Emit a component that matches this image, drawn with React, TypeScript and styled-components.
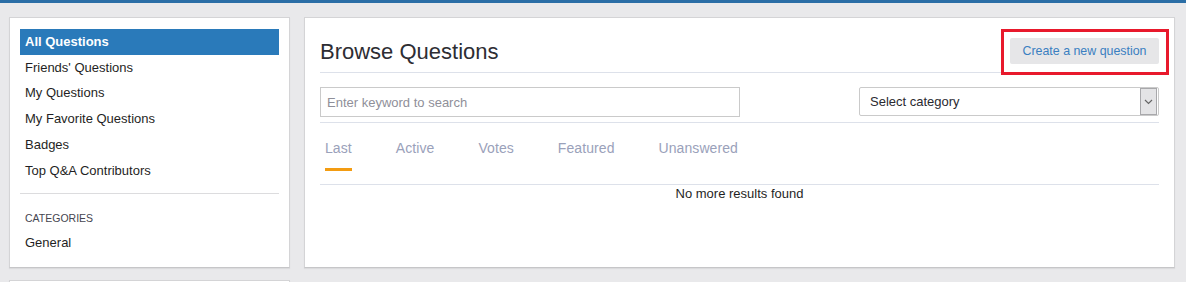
import styled, { createGlobalStyle } from "styled-components";

const GlobalStyle = createGlobalStyle`
  html, body {
    margin: 0;
    padding: 0;
    background: #e9e9eb;
    font-family: "Liberation Sans", Arial, sans-serif;
    color: #222;
  }
  * { box-sizing: border-box; }
`;

type Active = { active?: boolean };

const navItems = [
  "All Questions",
  "Friends' Questions",
  "My Questions",
  "My Favorite Questions",
  "Badges",
  "Top Q&A Contributors",
];

const tabs = ["Last", "Active", "Votes", "Featured", "Unanswered"];

export default function App() {
  return (
    <>
      <GlobalStyle />
      <TopBar />
      <Layout>
        <SideColumn>
          <Card>
            <NavList>
              {navItems.map((item, i) => (
                <NavItem key={item} active={i === 0}>
                  {item}
                </NavItem>
              ))}
            </NavList>
            <Divider />
            <SectionLabel>CATEGORIES</SectionLabel>
            <NavList>
              <NavItem>General</NavItem>
            </NavList>
          </Card>
          <EmptyCard />
        </SideColumn>

        <MainCard>
          <Header>
            <Title>Browse Questions</Title>
            <Highlight>
              <CreateButton>Create a new question</CreateButton>
            </Highlight>
          </Header>

          <FilterRow>
            <SearchInput placeholder="Enter keyword to search" />
            <SelectBox>
              <span>Select category</span>
              <ArrowBox>
                <svg width="9" height="6" viewBox="0 0 9 6">
                  <path d="M1 1l3.5 3.5L8 1" fill="none" stroke="#666" strokeWidth="1.2" />
                </svg>
              </ArrowBox>
            </SelectBox>
          </FilterRow>

          <TabBar>
            {tabs.map((t, i) => (
              <Tab key={t} active={i === 0}>
                {t}
              </Tab>
            ))}
          </TabBar>

          <Empty>No more results found</Empty>
        </MainCard>
      </Layout>
    </>
  );
}

const TopBar = styled.div`
  height: 3px;
  background: #2b6ea6;
`;

const Layout = styled.div`
  display: flex;
  align-items: flex-start;
  gap: 14px;
  padding: 14px 11px 0 9px;
`;

const SideColumn = styled.div`
  width: 281px;
  flex-shrink: 0;
  display: flex;
  flex-direction: column;
  gap: 12px;
`;

const Card = styled.div`
  background: #fff;
  border: 1px solid #d4d4d6;
  border-bottom-color: #c6c6c8;
  box-shadow: 0 1px 1px rgba(0, 0, 0, 0.06);
  padding: 11px 10px 12px;
  height: 251px;
`;

const EmptyCard = styled(Card)`
  height: 60px;
`;

const NavList = styled.div`
  display: flex;
  flex-direction: column;
`;

const NavItem = styled.div<Active>`
  line-height: 25.7px;
  padding-left: 5px;
  font-size: 13px;
  font-weight: ${(p) => (p.active ? "bold" : "normal")};
  color: ${(p) => (p.active ? "#fff" : "#1f1f24")};
  background: ${(p) => (p.active ? "#2a7aba" : "transparent")};
`;

const Divider = styled.div`
  height: 1px;
  background: #dcdcde;
  margin: 10px 0 17px;
`;

const SectionLabel = styled.div`
  font-size: 10.5px;
  line-height: 14px;
  color: #454550;
  padding-left: 5px;
  margin-bottom: 5px;
`;

const MainCard = styled.div`
  flex: 1;
  min-height: 251px;
  background: #fff;
  border: 1px solid #d4d4d6;
  border-bottom-color: #c6c6c8;
  box-shadow: 0 1px 1px rgba(0, 0, 0, 0.06);
  padding: 20px 15px 0;
`;

const Header = styled.div`
  display: flex;
  justify-content: space-between;
  align-items: center;
  height: 35px;
  padding-bottom: 8px;
  border-bottom: 1px solid #dde1ea;
`;

const Title = styled.h1`
  margin: 2px 0 0;
  font-size: 22px;
  font-weight: normal;
  line-height: 26px;
  color: #2d2d33;
`;

const Highlight = styled.div`
  position: relative;
  &::after {
    content: "";
    position: absolute;
    top: -9px;
    left: -9px;
    right: -10px;
    bottom: -11px;
    border: 3px solid #e8192c;
    pointer-events: none;
  }
`;

const CreateButton = styled.button`
  display: block;
  height: 26px;
  width: 149px;
  padding: 0;
  border: none;
  border-radius: 2px;
  background: #e6e6e8;
  color: #3a7fc1;
  font-family: "Liberation Sans", Arial, sans-serif;
  font-size: 12.4px;
  cursor: pointer;
`;

const FilterRow = styled.div`
  display: flex;
  justify-content: space-between;
  margin-top: 14px;
  padding-bottom: 5px;
  border-bottom: 1px solid #dde1ea;
`;

const SearchInput = styled.input`
  width: 420px;
  height: 30px;
  border: 1px solid #cacaca;
  padding: 0 6px;
  font-family: "Liberation Sans", Arial, sans-serif;
  font-size: 13px;
  color: #333;
  outline: none;
  &::placeholder {
    color: #8f8f99;
  }
`;

const SelectBox = styled.div`
  width: 300px;
  height: 29px;
  border: 1px solid #cacaca;
  border-radius: 2px;
  display: flex;
  align-items: center;
  justify-content: space-between;
  padding-left: 10px;
  font-size: 13px;
  color: #2a2a30;
`;

const ArrowBox = styled.div`
  width: 17px;
  height: 27px;
  margin-right: 1px;
  background: #e4e4e6;
  border: 1px solid #a8a8ab;
  display: flex;
  align-items: center;
  justify-content: center;
`;

const TabBar = styled.div`
  display: flex;
  gap: 44px;
  padding: 17px 0 13px 5px;
  border-bottom: 1px solid #dde1ea;
`;

const Tab = styled.div<Active>`
  font-size: 14px;
  line-height: 16px;
  letter-spacing: 0.08px;
  color: #9aa1ba;
  padding-bottom: 12px;
  border-bottom: 3px solid ${(p) => (p.active ? "#f39c12" : "transparent")};
  cursor: pointer;
`;

const Empty = styled.div`
  text-align: center;
  font-size: 13px;
  line-height: 15px;
  padding-top: 1px;
  color: #1f1f24;
`;
